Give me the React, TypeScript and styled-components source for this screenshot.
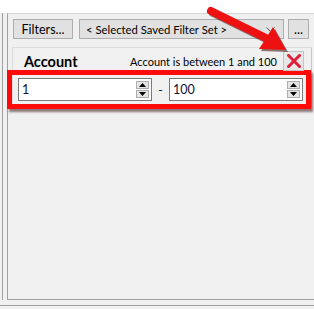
import React from "react";
import styled, { createGlobalStyle } from "styled-components";

const GlobalStyle = createGlobalStyle`
  html, body {
    margin: 0;
    padding: 0;
    background: #ffffff;
  }
  body {
    font-family: Lato, "Liberation Sans", sans-serif;
    font-size: 12px;
    color: #000;
  }
`;

export default function App() {
  return (
    <>
      <GlobalStyle />
      <Screen>
        <TopStrip />
        <Body>
          <SideRail />
          <MainPanel>
            <Toolbar>
              <ToolButton $width={60}>Filters...</ToolButton>
              <Combo>
                <ComboText>&lt; Selected Saved Filter Set &gt;</ComboText>
                <Chevron />
              </Combo>
              <ToolButton $width={21}>...</ToolButton>
            </Toolbar>

            <FilterCard>
              <CardHeader>
                <FieldName>Account</FieldName>
                <Summary>Account is between 1 and 100</Summary>
                <RemoveButton />
              </CardHeader>
              <RangeRow>
                <SpinInput value="1" />
                <Dash>-</Dash>
                <SpinInput value="100" />
              </RangeRow>
            </FilterCard>
          </MainPanel>
        </Body>
        <BottomBar />
        <CalloutArrow />
      </Screen>
    </>
  );
}

function SpinInput({ value }: { value: string }) {
  return (
    <InputBox>
      <InputText>{value}</InputText>
      <Spinner>
        <SpinButton>
          <svg width="7" height="4" viewBox="0 0 7 4">
            <polygon points="0,4 7,4 3.5,0" fill="#000" />
          </svg>
        </SpinButton>
        <SpinButton>
          <svg width="7" height="4" viewBox="0 0 7 4">
            <polygon points="0,0 7,0 3.5,4" fill="#000" />
          </svg>
        </SpinButton>
      </Spinner>
    </InputBox>
  );
}

function Chevron() {
  return (
    <ChevronIcon width="9" height="5" viewBox="0 0 9 5">
      <polyline points="0.5,0.5 4.5,4.5 8.5,0.5" fill="none" stroke="#555" strokeWidth="1" />
    </ChevronIcon>
  );
}

function RemoveButton() {
  return (
    <XButton>
      <svg width="14" height="14" viewBox="0 0 14 14">
        <path d="M1.5 1.5 L12.5 12.5 M12.5 1.5 L1.5 12.5" stroke="#e0203a" strokeWidth="3" strokeLinecap="square" />
      </svg>
    </XButton>
  );
}

function CalloutArrow() {
  return (
    <ArrowSvg width="314" height="80" viewBox="0 0 314 80">
      <g transform="translate(2,2)" fill="#3a1010" stroke="#3a1010" opacity="0.55">
        <line x1="211" y1="11" x2="266" y2="38" strokeWidth="8" strokeLinecap="round" />
        <polygon points="286,50 273,27 259,49" strokeWidth="0" />
      </g>
      <g fill="#ee1111" stroke="#ee1111">
        <line x1="211" y1="11" x2="266" y2="38" strokeWidth="8" strokeLinecap="round" />
        <polygon points="286,50 273,27 259,49" strokeWidth="0" />
      </g>
    </ArrowSvg>
  );
}

const Screen = styled.div`
  position: relative;
  width: 314px;
  height: 309px;
  overflow: hidden;
  background: #f0f0f0;
  display: flex;
  flex-direction: column;
`;

const TopStrip = styled.div`
  height: 13px;
  flex: none;
  background: #ffffff;
`;

const Body = styled.div`
  display: flex;
  height: 287px;
  flex: none;
`;

const SideRail = styled.div`
  width: 4px;
  margin-left: 2px;
  border-left: 1px solid #a0a0a0;
  flex: none;
`;

const MainPanel = styled.div`
  flex: 1;
  border-left: 1px solid #a0a0a0;
  border-top: 1px solid #d4d4d4;
  border-bottom: 1px solid #a0a0a0;
  padding: 5px 0 0 4px;
  margin-right: -20px;
`;

const Toolbar = styled.div`
  display: flex;
  align-items: center;
  gap: 4px;
  padding-left: 1px;
  height: 20px;
`;

const ToolButton = styled.div<{ $width: number }>`
  width: ${(p) => p.$width}px;
  height: 20px;
  box-sizing: border-box;
  border: 1px solid #adadad;
  background: #e1e1e1;
  display: flex;
  align-items: center;
  justify-content: center;
  font-size: 12.5px;
  margin-right: 2px;
`;

const Combo = styled.div`
  width: 205px;
  height: 20px;
  box-sizing: border-box;
  border: 1px solid #adadad;
  background: #e1e1e1;
  display: flex;
  align-items: center;
  padding: 0 8px 0 6px;
`;

const ComboText = styled.span`
  flex: 1;
  font-size: 11.3px;
  white-space: nowrap;
`;

const ChevronIcon = styled.svg`
  flex: none;
`;

const FilterCard = styled.div`
  margin-top: 8px;
  width: 300px;
  box-sizing: border-box;
  border: 1px solid #dcdcdc;
  border-right-color: #c8c8c8;
  padding: 0 0 3px 0;
`;

const CardHeader = styled.div`
  display: flex;
  align-items: center;
  height: 26px;
  padding: 0 7px 0 11px;
`;

const FieldName = styled.span`
  font-weight: bold;
  font-size: 14.5px;
`;

const Summary = styled.span`
  margin-left: auto;
  margin-right: 6px;
  font-size: 11px;
  white-space: nowrap;
`;

const XButton = styled.div`
  width: 21px;
  height: 20px;
  box-sizing: border-box;
  border: 1px solid #c4c4c4;
  background: #e8e8e8;
  display: flex;
  align-items: center;
  justify-content: center;
`;

const RangeRow = styled.div`
  display: flex;
  align-items: center;
  margin: 1px 5px 0 -1px;
  padding: 3px 3px 3px 6px;
  box-shadow: 0 0 0 5px #ff0a0a, 2px 3px 2px 5px rgba(60, 20, 20, 0.55);
`;

const InputBox = styled.div`
  width: 135px;
  height: 23px;
  box-sizing: border-box;
  border: 1px solid #7a7a7a;
  background: #ffffff;
  display: flex;
  align-items: center;
  padding: 0 2px 0 3px;
`;

const InputText = styled.span`
  flex: 1;
  font-size: 12.5px;
  color: #10103a;
`;

const Spinner = styled.div`
  display: flex;
  flex-direction: column;
  gap: 1px;
`;

const SpinButton = styled.div`
  width: 13px;
  height: 8px;
  box-sizing: border-box;
  border: 1px solid #adadad;
  background: #e5e5e5;
  display: flex;
  align-items: center;
  justify-content: center;
`;

const Dash = styled.span`
  width: 17px;
  text-align: center;
  font-size: 12px;
`;

const BottomBar = styled.div`
  margin-top: 5px;
  height: 1px;
  background: #a0a0a0;
`;

const ArrowSvg = styled.svg`
  position: absolute;
  left: 0;
  top: 0;
  pointer-events: none;
`;
